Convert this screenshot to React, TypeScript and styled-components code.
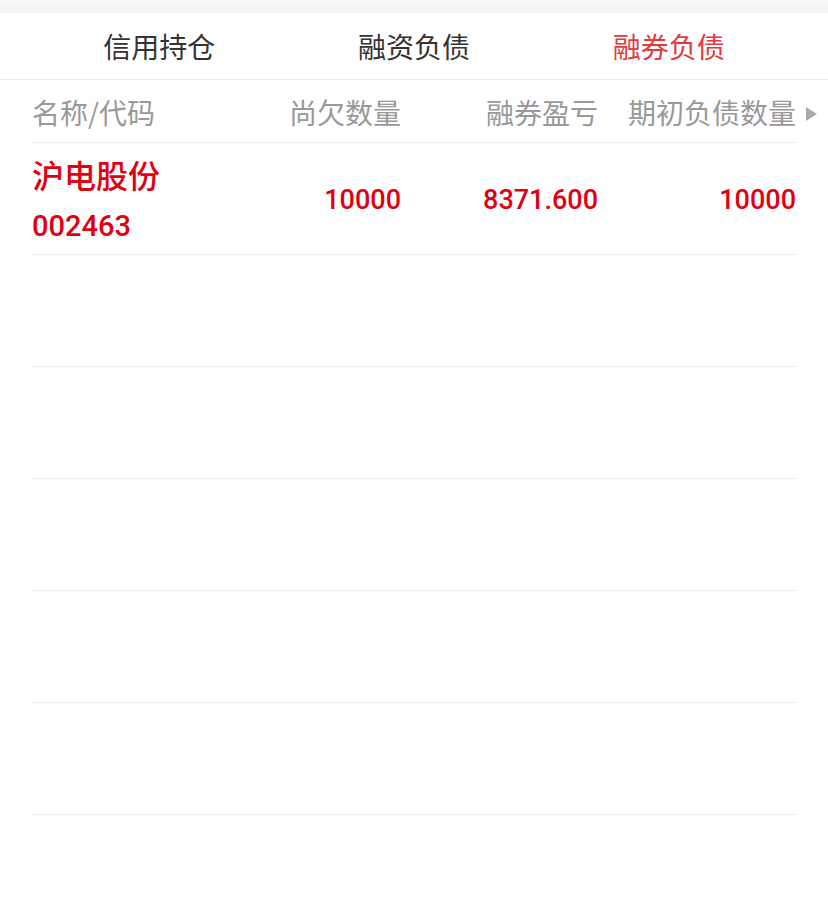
import React from "react";
import styled, { createGlobalStyle } from "styled-components";

const Global = createGlobalStyle`
  html, body { margin: 0; padding: 0; background: #fff; }
  body { font-family: "Noto Sans CJK SC", "Noto Sans", sans-serif; }
`;

const Page = styled.div`
  width: 828px;
  background: #fff;
`;

const TopStrip = styled.div`
  height: 13px;
  background: #f5f5f5;
  border-top: 1px solid #fafafa;
  box-sizing: border-box;
`;

const TabBar = styled.div`
  display: grid;
  grid-template-columns: repeat(3, 1fr);
  padding: 0 32px;
  height: 67px;
  border-bottom: 1px solid #ececec;
  box-sizing: border-box;
`;

const Tab = styled.div<{ $active?: boolean }>`
  display: flex;
  align-items: center;
  justify-content: center;
  font-size: 28px;
  color: ${(p) => (p.$active ? "#e4393c" : "#333")};
`;

const Table = styled.div`
  padding: 0 32px;
`;

const Row = styled.div<{ $h: number }>`
  display: grid;
  grid-template-columns: 172px 197px 197px 198px;
  height: ${(p) => p.$h}px;
  border-bottom: 1px solid #ececec;
  box-sizing: border-box;
  align-items: center;
`;

const HeadCell = styled.div<{ $left?: boolean }>`
  font-size: 28px;
  color: #999;
  text-align: ${(p) => (p.$left ? "left" : "right")};
  position: relative;
  line-height: 1;
  padding-top: 2px;
`;

const Arrow = styled.span`
  position: absolute;
  right: -21px;
  top: 11px;
  width: 0;
  height: 0;
  border-top: 7px solid transparent;
  border-bottom: 7px solid transparent;
  border-left: 11px solid #aaa;
`;

const NameCell = styled.div`
  display: flex;
  flex-direction: column;
  color: #e00011;
  padding-top: 4px;
`;

const Name = styled.div`
  font-size: 32px;
  line-height: 49px;
  font-weight: 500;
`;

const Code = styled.div`
  font-family: Roboto, "Noto Sans", sans-serif;
  font-size: 29px;
  line-height: 49px;
  margin-top: 3px;
  font-weight: 500;
`;

const Num = styled.div`
  font-family: Roboto, "Noto Sans", sans-serif;
  font-size: 27px;
  font-weight: 500;
  color: #e00011;
  text-align: right;
  padding-top: 2px;
`;

export default function App() {
  const empties = [0, 1, 2, 3, 4];
  return (
    <Page>
      <Global />
      <TopStrip />
      <TabBar>
        <Tab>信用持仓</Tab>
        <Tab>融资负债</Tab>
        <Tab $active>融券负债</Tab>
      </TabBar>
      <Table>
        <Row $h={63}>
          <HeadCell $left>名称/代码</HeadCell>
          <HeadCell>尚欠数量</HeadCell>
          <HeadCell>融券盈亏</HeadCell>
          <HeadCell>
            期初负债数量
            <Arrow />
          </HeadCell>
        </Row>
        <Row $h={112}>
          <NameCell>
            <Name>沪电股份</Name>
            <Code>002463</Code>
          </NameCell>
          <Num>10000</Num>
          <Num>8371.600</Num>
          <Num>10000</Num>
        </Row>
        {empties.map((i) => (
          <Row key={i} $h={112} />
        ))}
      </Table>
    </Page>
  );
}
